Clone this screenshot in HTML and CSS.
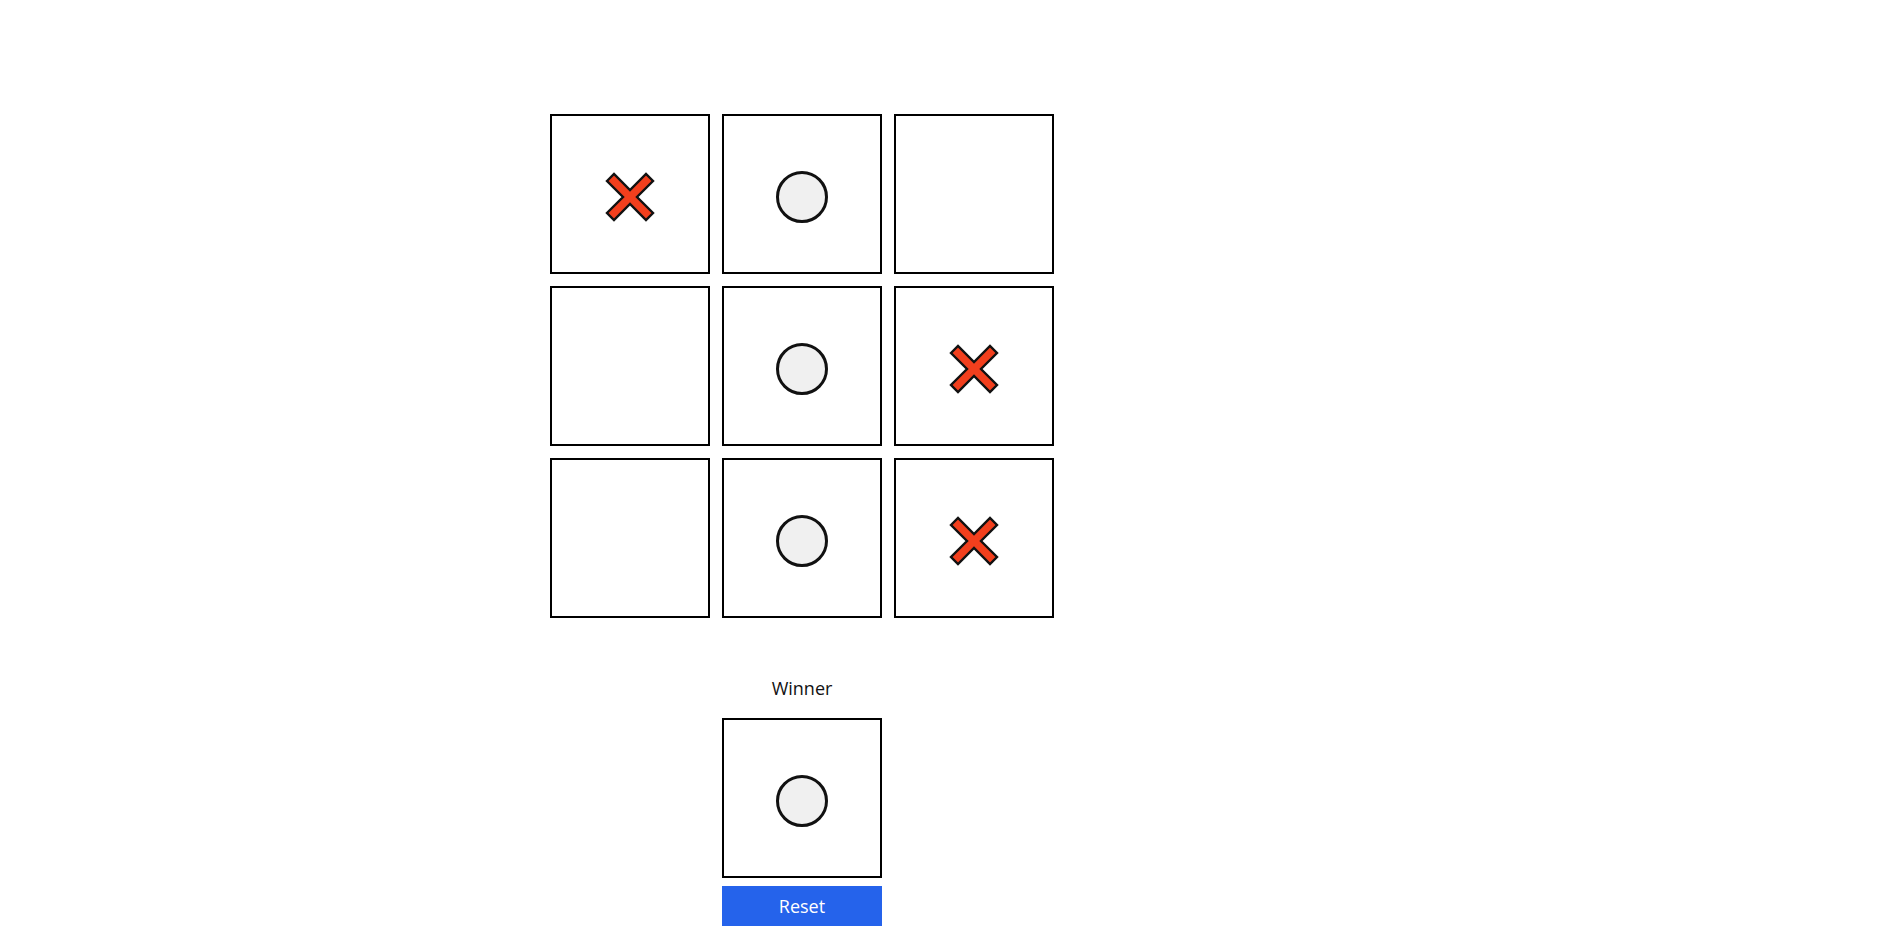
FILE: index.html
```html
<!DOCTYPE html>
<html lang="en">
<head>
<meta charset="utf-8">
<title>Tic Tac Toe</title>
<link rel="stylesheet" href="styles.css">
</head>
<body>
<main class="game">
  <div class="board">
    <div class="cell"><svg class="mark-x" width="52" height="52" viewBox="-3 -3 52 52"><polygon points="0,7 7,0 23,16 39,0 46,7 30,23 46,39 39,46 23,30 7,46 0,39 16,23"/></svg></div>
    <div class="cell"><svg class="mark-o" width="54" height="54" viewBox="0 0 54 54"><circle cx="27" cy="27" r="24.5"/></svg></div>
    <div class="cell"></div>
    <div class="cell"></div>
    <div class="cell"><svg class="mark-o" width="54" height="54" viewBox="0 0 54 54"><circle cx="27" cy="27" r="24.5"/></svg></div>
    <div class="cell"><svg class="mark-x" width="52" height="52" viewBox="-3 -3 52 52"><polygon points="0,7 7,0 23,16 39,0 46,7 30,23 46,39 39,46 23,30 7,46 0,39 16,23"/></svg></div>
    <div class="cell"></div>
    <div class="cell"><svg class="mark-o" width="54" height="54" viewBox="0 0 54 54"><circle cx="27" cy="27" r="24.5"/></svg></div>
    <div class="cell"><svg class="mark-x" width="52" height="52" viewBox="-3 -3 52 52"><polygon points="0,7 7,0 23,16 39,0 46,7 30,23 46,39 39,46 23,30 7,46 0,39 16,23"/></svg></div>
  </div>
  <section class="result">
    <p class="result-label">Winner</p>
    <div class="cell"><svg class="mark-o" width="54" height="54" viewBox="0 0 54 54"><circle cx="27" cy="27" r="24.5"/></svg></div>
    <button class="reset" type="button">Reset</button>
  </section>
</main>
</body>
</html>
```
FILE: styles.css
```css
* { box-sizing: border-box; }
html, body { margin: 0; padding: 0; background: #ffffff; }
body {
  font-family: "Open Sans", "Noto Sans", "Liberation Sans", sans-serif;
  color: #111111;
}
.game {
  padding: 114px 0 0 550px;
  display: flex;
  flex-direction: column;
  width: 1054px;
}
.board {
  display: grid;
  grid-template-columns: repeat(3, 160px);
  grid-auto-rows: 160px;
  gap: 12px;
}
.cell {
  width: 160px;
  height: 160px;
  border: 2px solid #000000;
  background: #ffffff;
  display: flex;
  align-items: center;
  justify-content: center;
  padding-top: 5px;
}
.mark-x polygon {
  fill: #f23f1d;
  stroke: #111111;
  stroke-width: 2.4;
  stroke-linejoin: miter;
}
.mark-o circle {
  fill: #f0f0f0;
  stroke: #111111;
  stroke-width: 3;
}
.result {
  width: 504px;
  margin-top: 57px;
  display: flex;
  flex-direction: column;
  align-items: center;
}
.result-label {
  margin: 0 0 17px 0;
  font-size: 18px;
  line-height: 26px;
}
.reset {
  margin-top: 8px;
  width: 160px;
  height: 40px;
  border: none;
  background: #2563eb;
  color: #ffffff;
  font-family: "Open Sans", "Noto Sans", "Liberation Sans", sans-serif;
  font-size: 18px;
  padding: 0;
  cursor: pointer;
}
```
